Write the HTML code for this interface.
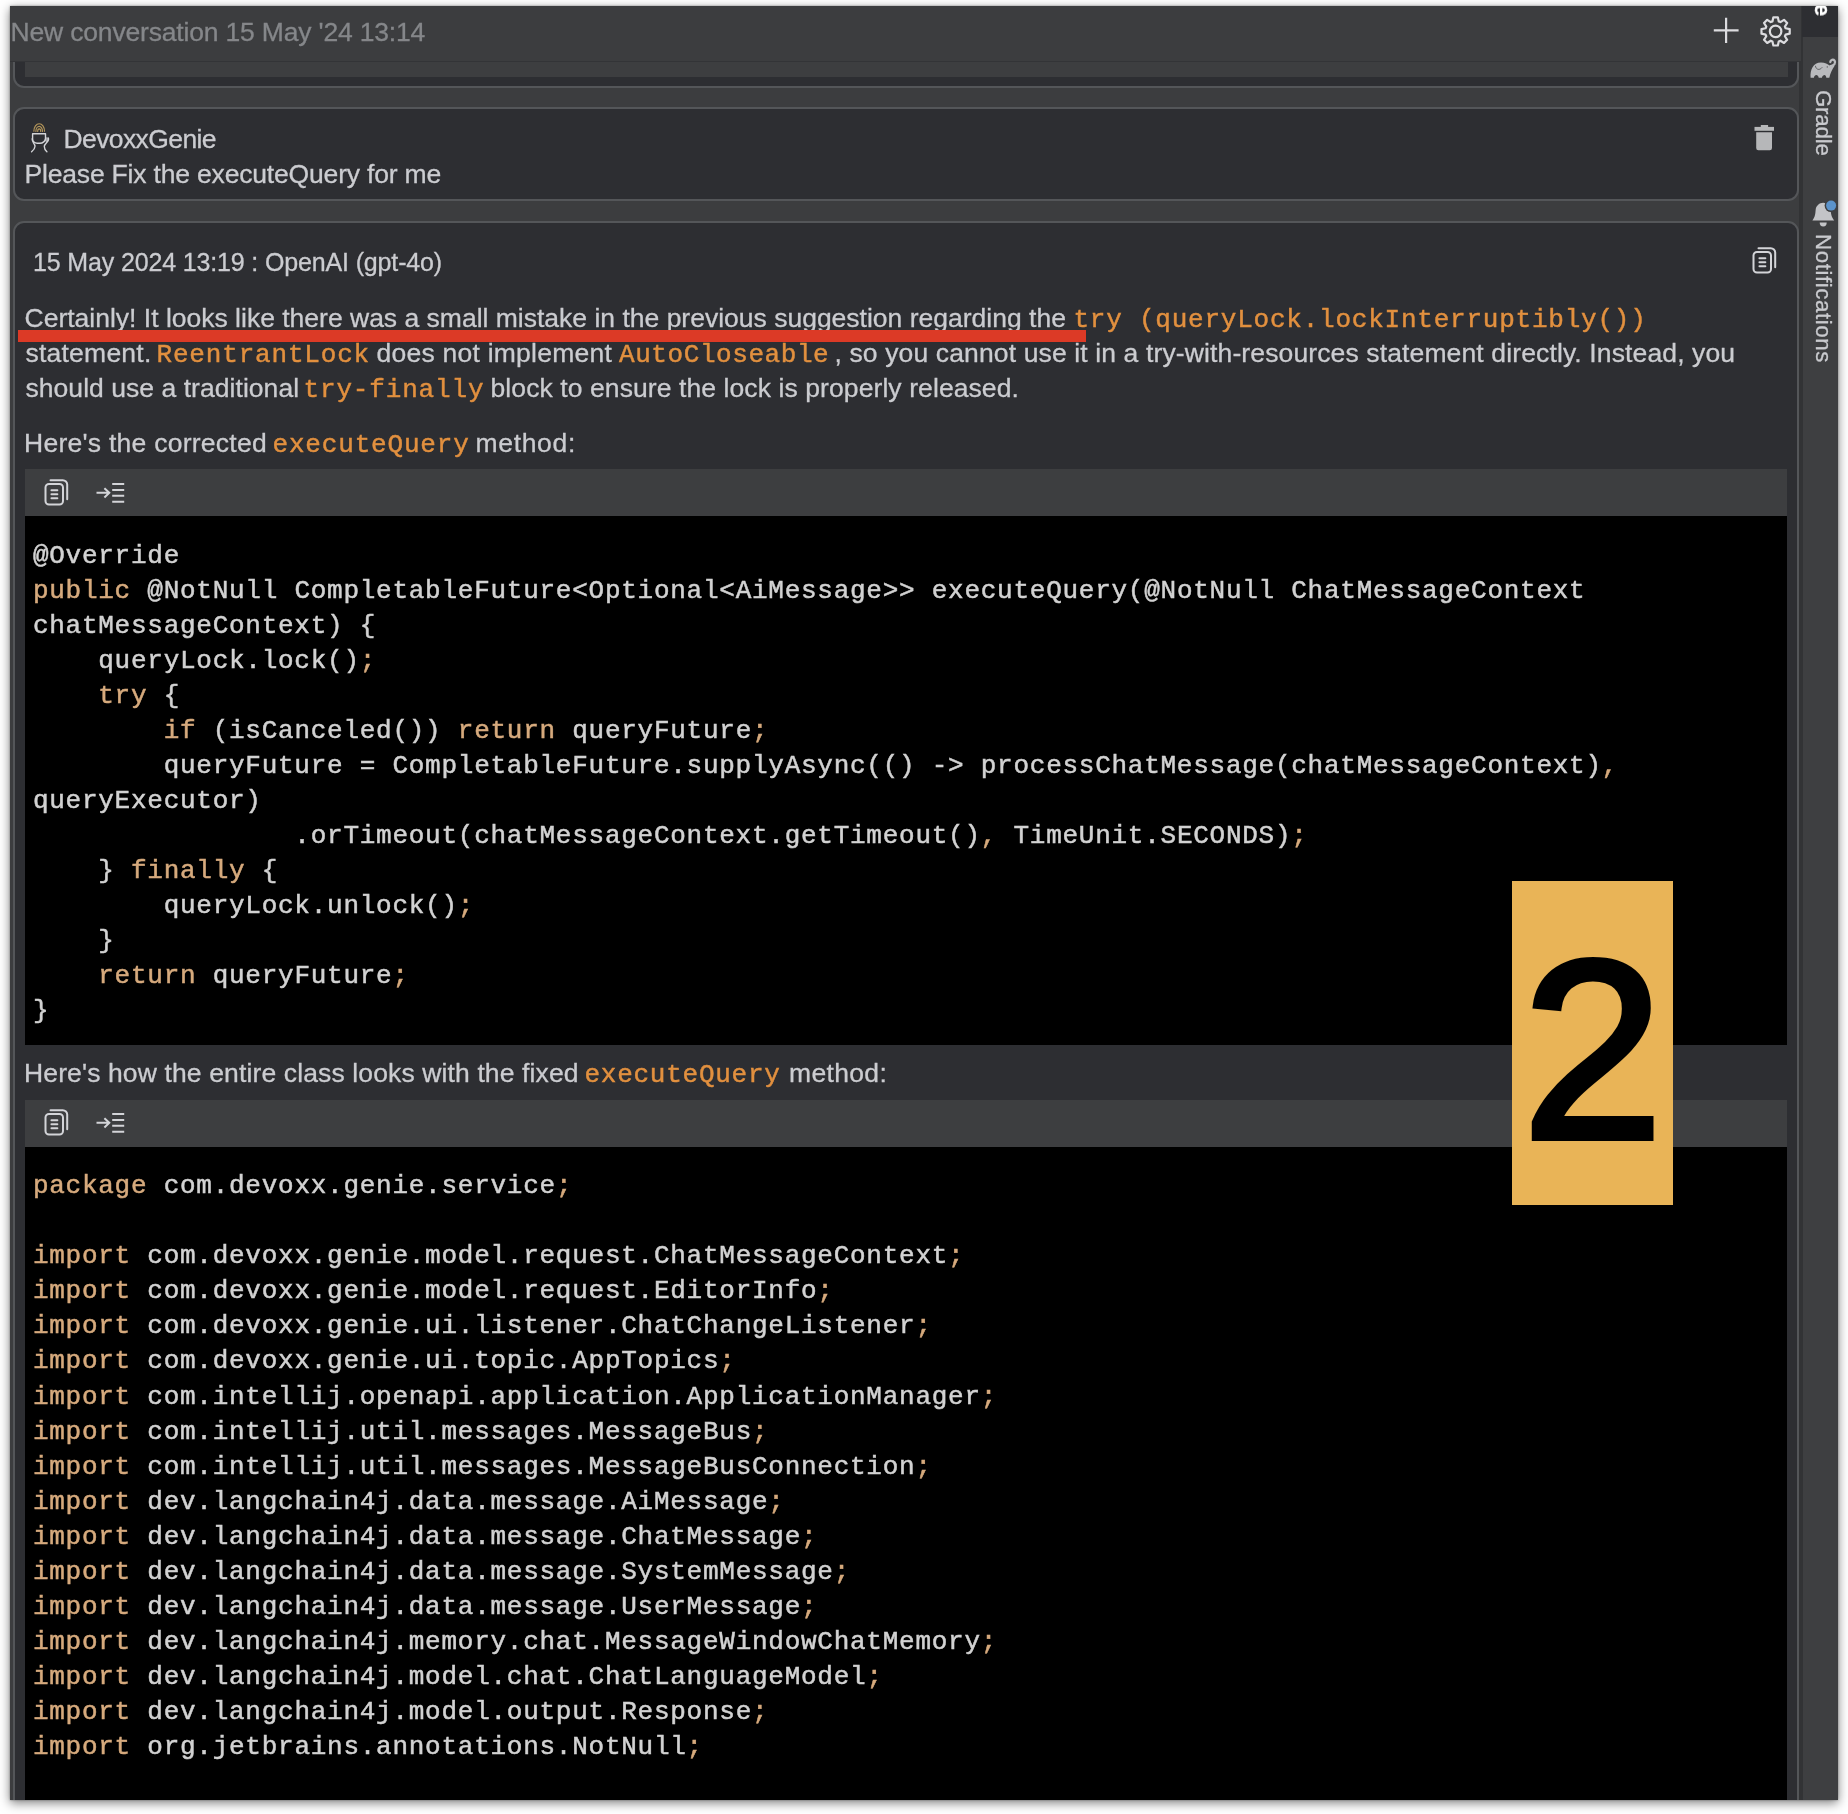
<!DOCTYPE html>
<html lang="en"><head><meta charset="utf-8"><title>DevoxxGenie</title>
<style>
html,body{margin:0;padding:0;background:#fff;}
body{width:1848px;height:1814px;position:relative;overflow:hidden;font-family:"Liberation Sans",sans-serif;color:#cbccd0;}
#frame{position:absolute;left:10px;top:6px;width:1828px;height:1793.5px;background:#3c3d3f;box-shadow:0 3px 10px rgba(0,0,0,.5),0 0 2px rgba(0,0,0,.35);overflow:hidden;}
#frame>*{position:absolute;}
#canvas{position:absolute;left:-10px;top:-6px;width:1848px;height:1814px;will-change:transform;}
#canvas>*{position:absolute;}
.t{position:absolute;white-space:pre;line-height:1;-webkit-text-stroke:0.3px currentColor;}
.m{font-family:"Liberation Mono","DejaVu Sans Mono",monospace;font-size:26.0px;letter-spacing:0.74px;-webkit-text-stroke:0.45px currentColor;}
.o{color:#e2903f;}
.card{box-sizing:border-box;left:13px;width:1786px;border:2px solid #545659;border-radius:11px;background:#2d2e32;}
.tool{left:25px;width:1762px;height:46.9px;background:#3d3e40;}
.blk{left:25px;width:1762px;background:#000;}
pre.code{position:absolute;margin:0;font-family:"Liberation Mono","DejaVu Sans Mono",monospace;font-size:26.0px;letter-spacing:0.74px;line-height:35.07px;color:#d2d2d2;white-space:pre;-webkit-text-stroke:0.5px currentColor;}
pre.code b{font-weight:normal;color:#d6aa7d;}
.ic{position:absolute;overflow:visible;}
.side{position:absolute;white-space:pre;line-height:1;font-size:22.3px;color:#c9cace;transform-origin:0 0;transform:rotate(90deg);-webkit-text-stroke:0.3px currentColor;}

</style></head><body>
<div id="frame"><div id="canvas">
<div class="card" style="top:20px;height:67.5px"></div>
<div style="left:25px;top:55px;width:1763px;height:22px;background:#3d3e40"></div>
<div class="card" style="top:107px;height:93.5px"></div>
<div class="card" style="top:220.5px;height:1700px"></div>
<div id="hdr" style="left:10px;top:6px;width:1791px;height:55px;background:#3c3d3f;border-bottom:1px solid #333437"></div>
<div class="tool" style="top:469.4px"></div>
<div class="blk" style="top:516.3px;height:528.9px"></div>
<div class="tool" style="top:1099.9px"></div>
<div class="blk" style="top:1146.6px;height:700px"></div>
<div style="left:1799px;top:6px;width:4px;height:1800px;background:#323335"></div>
<div style="left:1799px;top:6px;width:2px;height:55px;background:#3c3d3f"></div>
<div id="sidebar" style="left:1802.5px;top:6px;width:36px;height:1800px;background:#3e3f41"></div>
<div style="left:1801.5px;top:6px;width:37px;height:30.7px;background:#2d2e32"></div>
<svg class="ic" style="left:0;top:0" width="1848" height="1814" viewBox="0 0 1848 1814" fill="none">
<path d="M1726.1 17.8V43M1713.8 30.4H1738.6" stroke="#dcdcdf" stroke-width="2.2"/>
<path d="M1772.44 21.39 L1773.36 17.28 L1777.84 17.28 L1778.76 21.39 L1780.45 22.09 L1784.01 19.83 L1787.17 22.99 L1784.91 26.55 L1785.61 28.24 L1789.72 29.16 L1789.72 33.64 L1785.61 34.56 L1784.91 36.25 L1787.17 39.81 L1784.01 42.97 L1780.45 40.71 L1778.76 41.41 L1777.84 45.52 L1773.36 45.52 L1772.44 41.41 L1770.75 40.71 L1767.19 42.97 L1764.03 39.81 L1766.29 36.25 L1765.59 34.56 L1761.48 33.64 L1761.48 29.16 L1765.59 28.24 L1766.29 26.55 L1764.03 22.99 L1767.19 19.83 L1770.75 22.09Z" stroke="#dcdcdf" stroke-width="2.2" stroke-linejoin="round"/>
<circle cx="1775.6" cy="31.4" r="5.75" stroke="#dcdcdf" stroke-width="2.2"/>
<g fill="#b6b7b9"><rect x="1760.8" y="125" width="7.3" height="2.6"/><rect x="1754.5" y="126.9" width="19.5" height="3.9"/><path d="M1756.2 132.2h15.8v15.8a2.2 2.2 0 0 1-2.2 2.2h-11.4a2.2 2.2 0 0 1-2.2-2.2z"/></g>
<g transform="translate(30 121)" stroke-linecap="round" stroke-linejoin="round">
<path d="M3.9 10.2A5.3 7.5 0 0 1 14.5 10.2M5.9 10.4A3.3 5 0 0 1 12.5 10.4M7.7 10.5A1.5 2.6 0 0 1 10.7 10.5" stroke="#b4965a" stroke-width="1.15"/>
<ellipse cx="16.7" cy="18.6" rx="1.9" ry="2.3" fill="#9fa0a3"/>
<path d="M2.6 12.7H15.5V17.2C15.5 20.2 12.6 22.3 9.9 22.3H7.2C4.6 22.3 2.6 20.4 2.6 18Z" stroke="#d3d4d8" stroke-width="1.4"/>
<path d="M2.3 17.6C1 20.5 5 22.3 5 25.2C5 27.6 3.4 29.2 1.6 30.7M18.3 17C20 20.5 14.3 22.3 14.3 25.6C14.3 28 15.5 29.5 16.9 30.7" stroke="#d3d4d8" stroke-width="1.4"/>
</g>
<path d="M1810.6 77.7C1810 70 1813 62.6 1821 62.6C1825 62.6 1827.8 64.3 1829.6 65.6L1832.6 64.2L1834.4 66.2C1832.4 69 1830.4 73 1829.3 77.7H1826.3C1826.1 76 1825.4 75.1 1824.5 75.1C1823.5 75.1 1822.3 76 1821.9 77.7H1818.7C1818.5 76 1817.4 75.1 1816.3 75.1C1815.2 75.1 1814.2 76 1813.9 77.7Z" fill="#b9babd"/>
<path d="M1830.6 66.4C1834.2 65.6 1836 62.8 1834.6 60.7C1833.3 59 1830.4 59.6 1830.3 62" stroke="#b9babd" stroke-width="2.3" stroke-linecap="round"/>
<path d="M1815.4 65.8C1815.8 69.5 1819.5 71 1822.3 67.2" stroke="#5a5b5e" stroke-width="0.9"/><circle cx="1827.3" cy="66.9" r="0.7" fill="#5a5b5e"/>
<path d="M1812.4 220.4C1815.5 216.5 1815.3 213 1815.7 209.5C1816.2 205.5 1819.5 202.7 1823.1 202.7C1826.8 202.7 1830.2 205.5 1830.6 209.5C1831 213 1831 216.5 1834.2 220.4Z" fill="#c3c4c7"/>
<path d="M1819.7 222.5H1826.7A3.5 3.9 0 0 1 1819.7 222.5Z" fill="#c3c4c7"/>
<circle cx="1831.1" cy="205.6" r="6.5" fill="#3e3f41"/><circle cx="1831.1" cy="205.6" r="5" fill="#5b93cb"/>
</svg>
<svg class="ic" style="left:1751.7px;top:246.8px" width="26" height="28" viewBox="0 0 26 28" fill="none" stroke="#d3d4d8" stroke-width="2" stroke-linecap="round"><rect x="1.5" y="5" width="17.5" height="20.5" rx="3.5"/><path d="M6.5 1.2H18.8a4.4 4.4 0 0 1 4.4 4.4V20.2"/><path d="M7.4 11.2h6M7.4 15.2h6M7.4 19.2h6" stroke-width="1.9"/></svg>
<svg class="ic" style="left:43.5px;top:478.9px" width="26" height="28" viewBox="0 0 26 28" fill="none" stroke="#d3d4d8" stroke-width="2" stroke-linecap="round"><rect x="1.5" y="5" width="17.5" height="20.5" rx="3.5"/><path d="M6.5 1.2H18.8a4.4 4.4 0 0 1 4.4 4.4V20.2"/><path d="M7.4 11.2h6M7.4 15.2h6M7.4 19.2h6" stroke-width="1.9"/></svg>
<svg class="ic" style="left:95.9px;top:481.9px" width="30" height="22" viewBox="0 0 30 22" fill="none" stroke="#d3d4d8" stroke-width="2"><path d="M0.5 10.8H13M8.4 6.2l4.9 4.6-4.9 4.6" stroke-linejoin="miter"/><path d="M16.2 2h12M16.2 7.9h12M16.2 13.8h12M16.2 19.7h12"/></svg>
<svg class="ic" style="left:43.5px;top:1109.3px" width="26" height="28" viewBox="0 0 26 28" fill="none" stroke="#d3d4d8" stroke-width="2" stroke-linecap="round"><rect x="1.5" y="5" width="17.5" height="20.5" rx="3.5"/><path d="M6.5 1.2H18.8a4.4 4.4 0 0 1 4.4 4.4V20.2"/><path d="M7.4 11.2h6M7.4 15.2h6M7.4 19.2h6" stroke-width="1.9"/></svg>
<svg class="ic" style="left:95.9px;top:1112.3px" width="30" height="22" viewBox="0 0 30 22" fill="none" stroke="#d3d4d8" stroke-width="2"><path d="M0.5 10.8H13M8.4 6.2l4.9 4.6-4.9 4.6" stroke-linejoin="miter"/><path d="M16.2 2h12M16.2 7.9h12M16.2 13.8h12M16.2 19.7h12"/></svg>
<span class="t" id="h1" style="left:10.60px;top:18.77px;font-size:26.5px;letter-spacing:-0.181px;color:#85878a;">New conversation 15 May &#x27;24 13:14</span>
<span class="t" id="dg" style="left:63.50px;top:125.57px;font-size:26.5px;letter-spacing:-0.600px;">DevoxxGenie</span>
<span class="t" id="pf" style="left:24.50px;top:160.97px;font-size:26.5px;letter-spacing:-0.182px;">Please Fix the executeQuery for me</span>
<span class="t" id="ts" style="left:33.00px;top:250.04px;font-size:25.0px;letter-spacing:-0.147px;color:#cbccd0;">15 May 2024 13:19 : OpenAI (gpt-4o)</span>
<span class="t" id="l1a" style="left:24.50px;top:305.37px;font-size:26.5px;letter-spacing:-0.000px;">Certainly! It looks like there was a small mistake in the previous suggestion regarding the</span>
<span class="t m o" id="l1b" style="left:1073.50px;top:307.35px;letter-spacing:0.769px;">try (queryLock.lockInterruptibly())</span>
<span class="t" id="l2a" style="left:25.50px;top:339.97px;font-size:26.5px;letter-spacing:0.226px;">statement.</span>
<span class="t m o" id="l2b" style="left:156.50px;top:341.95px;letter-spacing:0.823px;">ReentrantLock</span>
<span class="t" id="l2c" style="left:376.50px;top:339.97px;font-size:26.5px;letter-spacing:0.235px;">does not implement</span>
<span class="t m o" id="l2d" style="left:619.00px;top:341.95px;letter-spacing:0.574px;">AutoCloseable</span>
<span class="t" id="l2e" style="left:834.50px;top:339.97px;font-size:26.5px;letter-spacing:0.128px;">, so you cannot use it in a try-with-resources statement directly. Instead, you</span>
<span class="t" id="l3a" style="left:25.50px;top:374.87px;font-size:26.5px;letter-spacing:0.044px;">should use a traditional</span>
<span class="t m o" id="l3b" style="left:303.50px;top:376.85px;letter-spacing:0.840px;">try-finally</span>
<span class="t" id="l3c" style="left:490.50px;top:374.87px;font-size:26.5px;letter-spacing:0.089px;">block to ensure the lock is properly released.</span>
<span class="t" id="l4a" style="left:24.00px;top:429.87px;font-size:26.5px;letter-spacing:0.261px;">Here&#x27;s the corrected</span>
<span class="t m o" id="l4b" style="left:272.50px;top:431.85px;letter-spacing:0.825px;">executeQuery</span>
<span class="t" id="l4c" style="left:475.50px;top:429.87px;font-size:26.5px;letter-spacing:0.667px;">method:</span>
<span class="t" id="l5a" style="left:24.00px;top:1060.17px;font-size:26.5px;letter-spacing:0.128px;">Here&#x27;s how the entire class looks with the fixed</span>
<span class="t m o" id="l5b" style="left:584.50px;top:1062.15px;letter-spacing:0.740px;">executeQuery</span>
<span class="t" id="l5c" style="left:789.00px;top:1060.17px;font-size:26.5px;letter-spacing:0.333px;">method:</span>
<pre class="code" id="c1" style="left:32.90px;top:538.54px">@Override
<b>public</b> @NotNull CompletableFuture&lt;Optional&lt;AiMessage&gt;&gt; executeQuery(@NotNull ChatMessageContext
chatMessageContext) {
    queryLock.lock()<b>;</b>
    <b>try</b> {
        <b>if</b> (isCanceled()) <b>return</b> queryFuture<b>;</b>
        queryFuture = CompletableFuture.supplyAsync(() -&gt; processChatMessage(chatMessageContext)<b>,</b>
queryExecutor)
                .orTimeout(chatMessageContext.getTimeout()<b>,</b> TimeUnit.SECONDS)<b>;</b>
    } <b>finally</b> {
        queryLock.unlock()<b>;</b>
    }
    <b>return</b> queryFuture<b>;</b>
}</pre>
<pre class="code" id="c2" style="left:32.90px;top:1169.14px"><b>package</b> com.devoxx.genie.service<b>;</b>

<b>import</b> com.devoxx.genie.model.request.ChatMessageContext<b>;</b>
<b>import</b> com.devoxx.genie.model.request.EditorInfo<b>;</b>
<b>import</b> com.devoxx.genie.ui.listener.ChatChangeListener<b>;</b>
<b>import</b> com.devoxx.genie.ui.topic.AppTopics<b>;</b>
<b>import</b> com.intellij.openapi.application.ApplicationManager<b>;</b>
<b>import</b> com.intellij.util.messages.MessageBus<b>;</b>
<b>import</b> com.intellij.util.messages.MessageBusConnection<b>;</b>
<b>import</b> dev.langchain4j.data.message.AiMessage<b>;</b>
<b>import</b> dev.langchain4j.data.message.ChatMessage<b>;</b>
<b>import</b> dev.langchain4j.data.message.SystemMessage<b>;</b>
<b>import</b> dev.langchain4j.data.message.UserMessage<b>;</b>
<b>import</b> dev.langchain4j.memory.chat.MessageWindowChatMemory<b>;</b>
<b>import</b> dev.langchain4j.model.chat.ChatLanguageModel<b>;</b>
<b>import</b> dev.langchain4j.model.output.Response<b>;</b>
<b>import</b> org.jetbrains.annotations.NotNull<b>;</b></pre>
<div style="left:18px;top:330px;width:1068px;height:11.6px;background:#dc3a26"></div>
<div id="badge" style="left:1511.6px;top:881px;width:161px;height:323.5px;background:#e9b457"></div>
<span class="t" id="two" style="left:1522px;top:923.0px;font-size:254px;color:#000;-webkit-text-stroke:6px #000">2</span>
<span class="side" id="sg" style="left:1834px;top:89.8px;letter-spacing:-0.22px">Gradle</span>
<span class="side" id="sn" style="left:1834px;top:233.9px;letter-spacing:0.58px">Notifications</span>
<span class="side" id="se" style="left:1833.2px;top:15.5px;font-weight:bold;color:#fff;transform:rotate(90deg) translateX(-100%)">DevoxxGenie</span>
</div></div>
</body></html>
